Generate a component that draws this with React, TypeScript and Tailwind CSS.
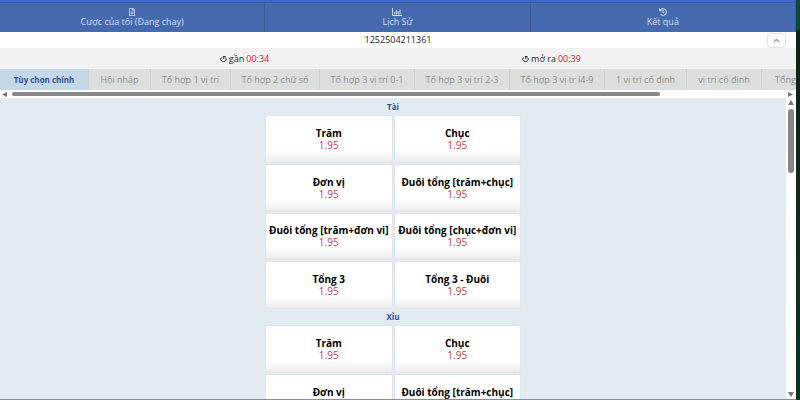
import React from "react";
import { FaHistory, FaRegFileAlt } from "react-icons/fa";
import { ChevronUp } from "lucide-react";

const ChartIcon: React.FC<{ className?: string }> = ({ className }) => (
  <svg viewBox="0 0 20 16" className={className} fill="none" stroke="currentColor" aria-hidden="true">
    <path d="M1 0 V15 H20" strokeWidth="2" />
    <path d="M5.5 13 V8 M9 13 V4 M12.5 13 V6.5 M16 13 V3" strokeWidth="2" />
  </svg>
);

const navItems = [
  { label: "Cược của tôi (Đang chạy)", icon: FaRegFileAlt },
  { label: "Lịch Sử", icon: ChartIcon },
  { label: "Kết quả", icon: FaHistory },
];

const tabs = [
  { label: "Tùy chọn chính", width: "w-[89px]" },
  { label: "Hội nhập", width: "w-[62px]" },
  { label: "Tổ hợp 1 vị trí", width: "w-[80px]" },
  { label: "Tổ hợp 2 chữ số", width: "w-[89px]" },
  { label: "Tổ hợp 3 vị trí 0-1", width: "w-[95px]" },
  { label: "Tổ hợp 3 vị trí 2-3", width: "w-[95px]" },
  { label: "Tổ hợp 3 vị tr í4-9", width: "w-[95px]" },
  { label: "1 vị trí cố định", width: "w-[82px]" },
  { label: "vị trí cố định", width: "w-[75px]" },
  { label: "Tổng", width: "w-[48px]" },
];

const options = [
  "Trăm",
  "Chục",
  "Đơn vị",
  "Đuôi tổng [trăm+chục]",
  "Đuôi tổng [trăm+đơn vi]",
  "Đuôi tổng [chục+đơn vi]",
  "Tổng 3",
  "Tổng 3 - Đuôi",
];

const arrowPaths = {
  up: "M0 5 L3 0 L6 5 Z",
  down: "M0 0 L6 0 L3 5 Z",
  left: "M5 0 L5 5 L0 2.5 Z",
  right: "M0 0 L5 2.5 L0 5 Z",
};

const Arrow: React.FC<{ dir: keyof typeof arrowPaths }> = ({ dir }) => (
  <svg viewBox="0 0 6 5" className="w-[6px] h-[5px] shrink-0" fill="#777777" aria-hidden="true">
    <path d={arrowPaths[dir]} />
  </svg>
);

const ClockIcon: React.FC = () => (
  <svg viewBox="0 0 14 12" className="w-[7px] h-[6px]" fill="none" stroke="#222222" strokeWidth="2" aria-hidden="true">
    <path d="M3.5 3 A5.6 4.5 0 1 0 10.5 3 M6 1 H11 M7.5 1 V6" />
  </svg>
);

const Countdown: React.FC<{ label: string; time: string }> = ({ label, time }) => (
  <div className="flex items-center justify-center gap-[2px]">
    <ClockIcon />
    <span>{label}</span>
    <span className="text-[#d2232a]">{time}</span>
  </div>
);

const BetSection: React.FC<{ title: string }> = ({ title }) => (
  <section className="w-[254px] mx-auto shrink-0">
    <h2 className="h-[18px] leading-[18px] text-[8px] font-bold text-center text-[#2f4f97]">
      {title}
    </h2>
    <div className="grid grid-cols-2 grid-rows-4 gap-[3px] h-48">
      {options.map((name) => (
        <button
          key={name}
          type="button"
          className="flex flex-col items-center justify-center rounded-[2px] bg-linear-to-b from-white from-75% to-[#ececec] shadow-[0_0_1px_#c4cad0] whitespace-nowrap"
        >
          <span className="text-[10px] leading-3 font-bold text-black">{name}</span>
          <span className="text-[10px] leading-3 text-[#c83c3c]">1.95</span>
        </button>
      ))}
    </div>
  </section>
);

const App: React.FC = () => (
  <div className="h-screen flex overflow-hidden bg-white font-['Open_Sans','Noto_Sans',sans-serif] text-[#222222]">
    <div className="flex-1 min-w-0 flex flex-col border-b border-[#7b93a8]">
      <nav className="grid grid-cols-3 h-8 shrink-0 border-t-2 border-[#3f68cf] bg-[#466ab0]">
        {navItems.map(({ label, icon: Icon }) => (
          <a
            key={label}
            href="#"
            className="flex flex-col items-center justify-center gap-px border-t border-r border-[#3c5c9c] text-[9px] leading-[10px] text-[#d5def0]"
          >
            <Icon className="w-[10px] h-2" />
            {label}
          </a>
        ))}
      </nav>

      <div className="grid grid-cols-[1fr_auto_1fr] items-center h-4 shrink-0 text-[9px] leading-4">
        <span className="col-start-2">1252504211361</span>
        <button
          type="button"
          aria-label="Thu gọn"
          className="justify-self-end mr-[10px] w-[19px] h-[15px] flex items-center justify-center rounded-[4px] border border-[#e2e2e2] bg-white text-[#aaaaaa]"
        >
          <ChevronUp size={9} strokeWidth={4} />
        </button>
      </div>

      <div className="grid grid-cols-2 px-[91px] h-[21px] shrink-0 bg-[#f2f2f2] text-[9px]">
        <Countdown label="gần" time="00:34" />
        <Countdown label="mở ra" time="00:39" />
      </div>

      <div role="tablist" className="flex h-[21px] shrink-0 overflow-hidden bg-[#dcdfde] whitespace-nowrap">
        {tabs.map(({ label, width }, i) => (
          <button
            key={label}
            type="button"
            role="tab"
            aria-selected={i === 0}
            className={`${width} shrink-0 border-r border-[#cdd0cf] ${
              i === 0 ? "bg-[#c5d8e8] text-[8px] font-bold text-[#2f4f97]" : "text-[9px] text-[#8c8c8c]"
            }`}
          >
            {label}
          </button>
        ))}
      </div>

      <div className="flex items-center gap-1 h-2 shrink-0 px-[2px]">
        <Arrow dir="left" />
        <div className="flex-1">
          <div className="w-[84%] h-1 rounded-full bg-[#878787]" />
        </div>
        <Arrow dir="right" />
      </div>

      <div className="flex flex-1 min-h-0">
        <main className="flex-1 overflow-hidden flex flex-col bg-[#e2eaf2]">
          <BetSection title="Tài" />
          <BetSection title="Xỉu" />
        </main>
        <div className="w-[10px] flex flex-col items-center gap-1 py-[2px]">
          <Arrow dir="up" />
          <div className="flex-1">
            <div className="w-[6px] h-[23%] rounded-full bg-[#878787]" />
          </div>
          <Arrow dir="down" />
        </div>
      </div>
    </div>
    <div className="w-1 shrink-0 bg-linear-to-b from-[#0b4a35] from-7% via-[#141f18] via-8% to-[#053624]" />
  </div>
);

export default App;
